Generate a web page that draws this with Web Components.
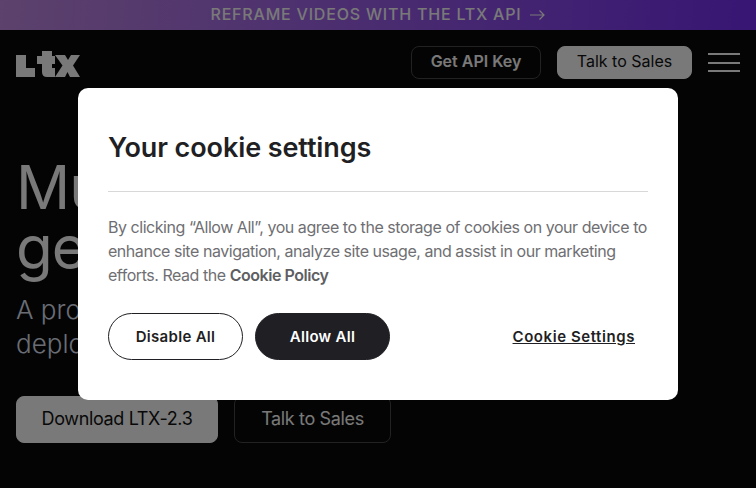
<!DOCTYPE html>
<html>
<head>
<meta charset="utf-8">
<style>
  html, body { margin: 0; height: 100%; background: #080808; overflow: hidden; }
  body { font-family: Inter, "Liberation Sans", sans-serif; }
</style>
</head>
<body>
<promo-bar>REFRAME VIDEOS WITH THE LTX API</promo-bar>
<site-header></site-header>
<hero-section></hero-section>
<cookie-modal></cookie-modal>

<script>
class PromoBar extends HTMLElement {
  constructor() {
    super();
    const shadowRoot = this.attachShadow({ mode: 'open' });
    shadowRoot.innerHTML = `<style>
      :host {
        display: flex;
        align-items: center;
        justify-content: center;
        gap: 9px;
        box-sizing: border-box;
        height: 30px;
        padding-bottom: 2px;
        background: linear-gradient(95deg, #b884d8 0%, #6f2ce8 100%);
        color: #f2f2f2;
        font-size: 16px;
        font-weight: 500;
        letter-spacing: .8px;
      }
      svg { display: block; margin-top: 1px; }
    </style>
    <slot></slot>
    <svg width="15" height="10" viewBox="0 0 15 10" fill="none" stroke="currentColor" stroke-width="1.2">
      <path d="M0 5H14M9.500 .5L14 5L9.500 9.500"/>
    </svg>`;
  }
}

class SiteButton extends HTMLElement {
  constructor() {
    super();
    const shadowRoot = this.attachShadow({ mode: 'open' });
    shadowRoot.innerHTML = `<style>
      :host {
        display: inline-flex;
        align-items: center;
        justify-content: center;
        box-sizing: border-box;
        padding-bottom: 3px;
        border-radius: 8px;
        border: 1px solid #444;
        color: #f2f2f2;
        white-space: nowrap;
      }
      :host([solid]) {
        background: #f2f2f2;
        border-color: #f2f2f2;
        color: #111;
      }
    </style><slot></slot>`;
  }
}

class SiteHeader extends HTMLElement {
  constructor() {
    super();
    const shadowRoot = this.attachShadow({ mode: 'open' });
    shadowRoot.innerHTML = `<style>
      :host {
        display: flex;
        align-items: center;
        height: 65px;
        padding: 0 16px;
      }
      .logo { display: block; margin-right: auto; margin-top: 2px; }
      site-button { height: 33px; font-size: 16px; font-weight: 600; }
      .api { width: 130px; }
      .sales { width: 135px; margin-left: 16px; font-weight: 400; }
      .menu { display: flex; flex-direction: column; gap: 6.5px; width: 32px; margin-left: 16px; }
      .menu span { height: 2px; background: #f2f2f2; }
    </style>
    <svg class="logo" width="64" height="26" viewBox="0 0 64 26" fill="#f2f2f2">
      <path d="M0 4H10V17H19V26H0Z"/>
      <path d="M26 0H36V5H39V13H36V17H39V26H31Q26 26 26 21V13H21V5H26Z"/>
      <path d="M39 4H49L52 9L55 4H64L57 14.500L64 26H54L51.500 21L49 26H39L46.500 14.500Z"/>
    </svg>
    <site-button class="api">Get API Key</site-button>
    <site-button class="sales" solid>Talk to Sales</site-button>
    <div class="menu"><span></span><span></span><span></span></div>`;
  }
}

class HeroSection extends HTMLElement {
  constructor() {
    super();
    const shadowRoot = this.attachShadow({ mode: 'open' });
    shadowRoot.innerHTML = `<style>
      :host {
        display: block;
        padding: 62px 16px 0;
        color: #f2f2f2;
      }
      h1 { margin: 0; font-size: 60px; line-height: 60px; font-weight: 400; letter-spacing: -1px; }
      p { margin: 16px 0 0; font-size: 26px; line-height: 34px; font-weight: 300; color: #d4dce8; }
      .actions { display: flex; gap: 16px; margin-top: 35px; }
      site-button { height: 47px; font-size: 18px; letter-spacing: -.35px; }
      .download { width: 202px; }
      .talk { width: 157px; }
    </style>
    <h1>Mu<br>ge</h1>
    <p>A pro<br>deplo</p>
    <div class="actions">
      <site-button class="download" solid>Download LTX-2.3</site-button>
      <site-button class="talk">Talk to Sales</site-button>
    </div>`;
  }
}

class PillButton extends HTMLElement {
  constructor() {
    super();
    const shadowRoot = this.attachShadow({ mode: 'open' });
    shadowRoot.innerHTML = `<style>
      :host {
        display: inline-flex;
        align-items: center;
        justify-content: center;
        box-sizing: border-box;
        width: 135px;
        height: 47px;
        border-radius: 24px;
        border: 1px solid #1f1f24;
        color: #1f1f24;
        font-size: 15px;
        font-weight: 600;
        letter-spacing: .3px;
      }
      :host([dark]) { background: #1f1f24; color: #fff; }
    </style><slot></slot>`;
  }
}

class CookieModal extends HTMLElement {
  constructor() {
    super();
    const shadowRoot = this.attachShadow({ mode: 'open' });
    shadowRoot.innerHTML = `<style>
      :host {
        position: fixed;
        inset: 0;
        display: flex;
        align-items: center;
        justify-content: center;
        background: rgba(0, 0, 0, .5);
      }
      .dialog {
        box-sizing: border-box;
        width: 600px;
        height: 312px;
        padding: 41px 30px 0;
        background: #fff;
        border-radius: 10px;
        color: #1f1f24;
      }
      h2 { margin: 0; font-size: 27px; line-height: 38px; font-weight: 600; letter-spacing: -.1px; }
      hr { margin: 24px 0 0; border: 0; border-top: 1px solid #d8d8d8; }
      p { margin: 23px 0 0; font-size: 16px; line-height: 24px; color: #6f6f73; letter-spacing: -.46px; }
      b { font-weight: 600; color: #5f5f63; }
      .actions { display: flex; align-items: center; gap: 12px; margin-top: 26px; }
      a { margin-left: auto; margin-right: 13px; font-size: 15px; font-weight: 600; letter-spacing: .57px; color: #1f1f24; text-decoration: underline; }
    </style>
    <div class="dialog">
      <h2>Your cookie settings</h2>
      <hr>
      <p>By clicking “Allow All”, you agree to the storage of cookies on your device to enhance site navigation, analyze site usage, and assist in our marketing efforts. Read the <b>Cookie Policy</b></p>
      <div class="actions">
        <pill-button>Disable All</pill-button>
        <pill-button dark>Allow All</pill-button>
        <a>Cookie Settings</a>
      </div>
    </div>`;
  }
}

customElements.define('promo-bar', PromoBar);
customElements.define('site-button', SiteButton);
customElements.define('site-header', SiteHeader);
customElements.define('hero-section', HeroSection);
customElements.define('pill-button', PillButton);
customElements.define('cookie-modal', CookieModal);
</script>
</body>
</html>
